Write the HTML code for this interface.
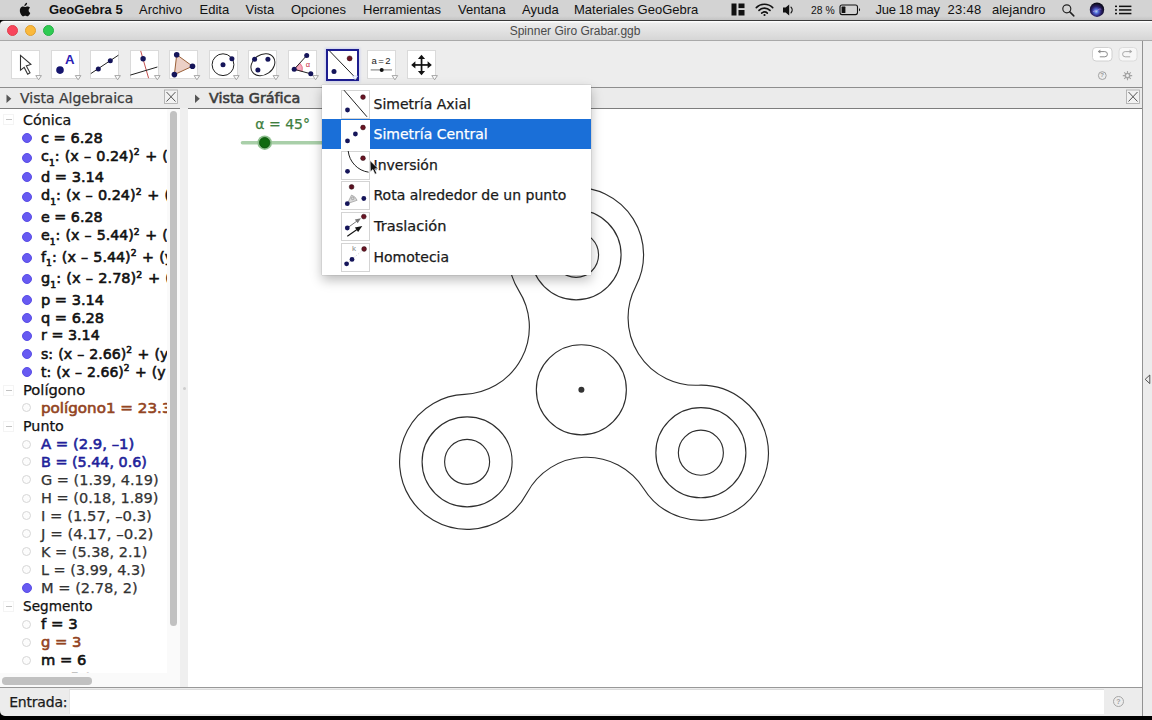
<!DOCTYPE html>
<html lang="es">
<head>
<meta charset="utf-8">
<title>Spinner Giro Grabar.ggb</title>
<style>
html,body{margin:0;padding:0;}
body{width:1152px;height:720px;overflow:hidden;position:relative;background:#000;font-family:"DejaVu Sans","Liberation Sans",sans-serif;font-size:14px;color:#1a1a1a;}
.abs{position:absolute;}
svg{position:absolute;left:0;top:0;overflow:visible;}
#menubar{left:0;top:0;width:1152px;height:20px;background:linear-gradient(#d3d3d3 0,#d3d3d3 16px,#c4c4c4 20px);font-family:"Liberation Sans",sans-serif;font-size:13px;color:#111;}
#menubar span{position:absolute;top:2px;white-space:nowrap;line-height:15px;}
#win{left:0;top:20px;width:1152px;height:696px;background:#3a3a3a;border-radius:5px 0 0 5px;}
#titlebar{border-radius:4px 0 0 0;left:0;top:21px;width:1152px;height:20px;background:linear-gradient(#fdfdfd 0,#fdfdfd 1px,#ececec 2px,#d6d6d6 19px);border-bottom:1px solid #a9a9a9;box-sizing:border-box;font-family:"Liberation Sans",sans-serif;font-size:12px;color:#4a4a4a;}
#titlebar .t{position:absolute;left:509.7px;top:3.4px;line-height:14px;white-space:nowrap;}
.tl{position:absolute;top:4.1px;width:11px;height:11px;border-radius:50%;box-sizing:border-box;}
#toolbar{left:0;top:41px;width:1152px;height:46px;background:#ededed;}
.tb{position:absolute;top:50px;width:29px;height:29px;background:#fff;border:1px solid #dadada;box-sizing:border-box;}
#hdr{left:0;top:87px;width:1143px;height:22px;background:#ebebeb;border-top:1px solid #8e8e8e;border-bottom:1px solid #7d7d7d;box-sizing:border-box;}
#alg{left:0;top:109px;width:167px;height:564px;background:#fff;overflow:hidden;}
#vsb{left:167px;top:109px;width:13px;height:578px;background:#fafafa;}
#hsb{left:0;top:673px;width:180px;height:14px;background:#fafafa;}
#split{left:180px;top:108px;width:8px;height:579px;background:#efefef;}
#gfx{left:188px;top:109px;width:954px;height:578px;background:#fff;overflow:hidden;}
#rstrip{left:1142px;top:41px;width:10px;height:675px;background:#ececec;border-left:1px solid #929292;box-sizing:border-box;}
#inputbar{left:0;top:687px;width:1142px;height:29px;background:#ececec;border-radius:0 0 0 5px;border-top:1px solid #989898;box-sizing:border-box;}
.row{position:absolute;left:0;white-space:nowrap;height:18px;line-height:18px;}
.row .tx{position:absolute;left:41px;top:0;display:inline-block;transform-origin:0 50%;}
.cat .tx{left:23.4px;}
.b .tx{font-weight:normal;-webkit-text-stroke:0.58px currentColor;transform:scaleX(1.0);}
.dot{position:absolute;left:22px;top:4px;width:10px;height:10px;border-radius:50%;box-sizing:border-box;}
.on{background:#675af2;border:1px solid #5a4ee6;}
.off{background:#fcfcfc;border:1px solid #d6d6d6;width:9px;height:9px;left:22.3px;top:4.5px;}
.exp{position:absolute;left:3px;top:4px;width:11px;height:11px;border:1px solid #f4f4f4;box-sizing:border-box;}
.exp:after{content:"";position:absolute;left:1.5px;top:4px;width:6px;height:1px;background:#c2c2c2;}
sub{font-size:9px;vertical-align:baseline;position:relative;top:4.5px;line-height:0;}
sup{font-size:9px;vertical-align:baseline;position:relative;top:-5.7px;line-height:0;letter-spacing:0.4px;}
.eq .tx{word-spacing:0.6px;}
#popup{left:322px;top:84.6px;width:269.2px;height:190.6px;background:#fff;box-shadow:0 5px 11px rgba(0,0,0,0.27),0 0 1px rgba(0,0,0,0.35);}
.mi{position:absolute;left:0;width:269.2px;height:30px;}
.mi .ic{position:absolute;left:19px;top:1px;width:29px;height:29px;background:#fff;border:1px solid #d4d4d4;box-sizing:border-box;}
.mi .lb{position:absolute;left:51.5px;top:6px;line-height:18px;white-space:nowrap;}
.mi.sel{background:#1a6fd8;color:#fff;}
.mi.sel .ic{border-color:#fff;}
.row{width:167px;color:#111;}
.g .tx,.cat .tx,.mi .lb,.rg{-webkit-text-stroke:0.25px currentColor;}
.br{color:#934422;}.bl{color:#221f9a;}.g{color:#333;}
</style>
</head>
<body>
<div id="menubar" class="abs">
<svg width="1152" height="20" viewBox="0 0 1152 20">
<!-- apple -->
<path fill="#111" transform="translate(25 9.3) scale(0.86) translate(-26.7 -10)" d="M28.3 5.1c.9-1.1.8-2.2.8-2.6-.8.05-1.75.55-2.3 1.2-.6.65-.95 1.5-.85 2.45.9.05 1.7-.4 2.35-1.05zM30.9 11.1c0-1.9 1.55-2.8 1.6-2.85-.9-1.3-2.25-1.45-2.75-1.5-1.15-.1-2.25.7-2.85.7-.6 0-1.5-.7-2.5-.65-1.25 0-2.45.75-3.1 1.9-1.3 2.3-.35 5.7.95 7.55.65.9 1.4 1.95 2.35 1.9.95-.05 1.3-.6 2.45-.6 1.15 0 1.45.6 2.45.6 1 0 1.65-.95 2.3-1.85.7-1.05 1-2.05 1-2.1-.05-.05-1.9-.75-1.9-3.1z"/>
<!-- layout icon -->
<rect x="731.5" y="3.5" width="5" height="12" fill="#111"/><rect x="738.5" y="3.5" width="6" height="4.6" fill="#111"/><rect x="738.5" y="10" width="6" height="5.5" fill="#111"/>
<!-- wifi -->
<g fill="none" stroke="#111" stroke-width="1.6" stroke-linecap="round"><path d="M756.3 7.6a11.6 11.6 0 0 1 16.4 0"/><path d="M759 10.4a7.8 7.8 0 0 1 11 0"/><path d="M761.7 13.1a3.9 3.9 0 0 1 5.6 0"/></g><circle cx="764.5" cy="15" r="1.1" fill="#111"/>
<!-- volume -->
<path fill="#111" d="M783 7.6h2.6l3.6-3v10.8l-3.6-3H783z"/><path d="M791 7.2a4 4 0 0 1 0 5.6" fill="none" stroke="#111" stroke-width="1.2" stroke-linecap="round"/>
<!-- battery -->
<rect x="840" y="5" width="17.5" height="9.6" rx="2" fill="none" stroke="#111" stroke-width="1.1"/><rect x="841.6" y="6.6" width="3.8" height="6.4" rx="0.6" fill="#111"/><path d="M859 8.3v3a1.6 1.6 0 0 0 0-3z" fill="#111"/>
<!-- search -->
<circle cx="1066.8" cy="8.8" r="4" fill="none" stroke="#222" stroke-width="1.15"/><path d="M1069.8 11.9l4 4" stroke="#222" stroke-width="1.5" stroke-linecap="round"/>
<!-- siri -->
<defs><radialGradient id="siri" cx="0.45" cy="0.62" r="0.62"><stop offset="0" stop-color="#a8dcf4"/><stop offset="0.25" stop-color="#4f66d6"/><stop offset="0.55" stop-color="#2a1f6a"/><stop offset="0.9" stop-color="#0c0b1c"/></radialGradient></defs>
<circle cx="1097" cy="9.7" r="7.2" fill="url(#siri)"/><path d="M1093 11.8c1.6-1.6 3.2-.2 4.6-1.6s2.6-1.4 3.6-.8" stroke="#c79be0" stroke-width="1" fill="none" opacity=".55"/>
<!-- list -->
<g fill="#111"><rect x="1115" y="5.6" width="2" height="1.5"/><rect x="1119" y="5.6" width="12.4" height="1.5"/><rect x="1115" y="9.2" width="2" height="1.5"/><rect x="1119" y="9.2" width="12.4" height="1.5"/><rect x="1115" y="12.8" width="2" height="1.5"/><rect x="1119" y="12.8" width="12.4" height="1.5"/></g>
</svg>
<span style="left:49px;font-weight:bold">GeoGebra 5</span>
<span style="left:139px">Archivo</span>
<span style="left:199.5px">Edita</span>
<span style="left:245.5px">Vista</span>
<span style="left:291px">Opciones</span>
<span style="left:363px">Herramientas</span>
<span style="left:458px">Ventana</span>
<span style="left:522px">Ayuda</span>
<span style="left:574px">Materiales GeoGebra</span>
<span style="left:811.3px;top:3px;font-size:11.5px;transform:scaleX(0.9);transform-origin:0 50%">28 %</span>
<span style="left:875.5px;letter-spacing:-0.3px">Jue 18 may</span>
<span style="left:947.5px;letter-spacing:0.3px">23:48</span>
<span style="left:992px">alejandro</span>
</div>
<div id="win" class="abs"></div>
<div id="titlebar" class="abs">
<div class="tl" style="left:7px;background:#f8455c;border:0.5px solid #e0404a"></div>
<div class="tl" style="left:25px;background:#fbb93c;border:0.5px solid #e0a030"></div>
<div class="tl" style="left:43.2px;background:#2fcb52;border:0.5px solid #25b045"></div>
<div class="t">Spinner Giro Grabar.ggb</div>
</div>
<div id="toolbar" class="abs"></div>
<div class="tb" style="left:11px"></div>
<div class="tb" style="left:50.5px"></div>
<div class="tb" style="left:90px"></div>
<div class="tb" style="left:129.7px"></div>
<div class="tb" style="left:169.3px"></div>
<div class="tb" style="left:208.7px"></div>
<div class="tb" style="left:248.3px"></div>
<div class="tb" style="left:288px"></div>
<div class="abs" style="left:325.5px;top:48.5px;width:33px;height:32px;background:#fff;border:2.6px solid #1d1d8f;box-sizing:border-box;box-shadow:0 0 2px 1px rgba(200,205,240,0.9)"></div>
<div class="tb" style="left:367.3px"></div>
<div class="tb" style="left:407px"></div>
<div class="abs" style="left:371.5px;top:54.5px;font:9.5px 'Liberation Sans',sans-serif;color:#222;white-space:nowrap;line-height:11px;word-spacing:-1.2px">a = 2</div>
<div class="abs" style="left:65.1px;top:52.8px;font:bold 13.2px 'Liberation Sans',sans-serif;color:#2a20b4;line-height:14px">A</div>
<div class="abs" style="left:305.8px;top:60.4px;font:7.5px 'Liberation Sans',sans-serif;color:#c8283c;line-height:10px">α</div>
<svg width="1152" height="120" viewBox="0 0 1152 120">
<!-- dropdown triangles -->
<g fill="#fff" stroke="#9c9c9c" stroke-width="0.9" stroke-linejoin="round">
<path d="M35.8 75.6h5.6l-2.8 4.2z"/><path d="M75.3 75.6h5.6l-2.8 4.2z"/><path d="M114.8 75.6h5.6l-2.8 4.2z"/><path d="M154.5 75.6h5.6l-2.8 4.2z"/><path d="M194.1 75.6h5.6l-2.8 4.2z"/><path d="M233.5 75.6h5.6l-2.8 4.2z"/><path d="M273.1 75.6h5.6l-2.8 4.2z"/><path d="M312.8 75.6h5.6l-2.8 4.2z"/><path d="M392.1 75.6h5.6l-2.8 4.2z"/><path d="M431.8 75.6h5.6l-2.8 4.2z"/>
</g>
<!-- 1 move arrow -->
<path d="M20.5 55.4l10.4 9-4.6 1.5 3.7 6.8-2.3 1.5-3.5-6.8-3.7 2.8z" fill="#fff" stroke="#333" stroke-width="1.1" stroke-linejoin="miter"/>
<!-- 2 point -->
<circle cx="60" cy="70.1" r="3.8" fill="#15156e"/>
<!-- 3 line -->
<path d="M90.8 73.6L118.4 55.2" stroke="#222" stroke-width="1"/><circle cx="98.3" cy="68.9" r="2.5" fill="#15155a"/><circle cx="110.3" cy="60.7" r="2.5" fill="#15155a"/>
<!-- 4 perpendicular -->
<path d="M140.7 50.9L148.6 78.2" stroke="#c4504e" stroke-width="1"/><path d="M130.3 75.1L157.4 67" stroke="#222" stroke-width="1"/><circle cx="143.1" cy="58.7" r="2.7" fill="#15155a"/>
<!-- 5 polygon -->
<path d="M176.7 54.7L192.5 66.2 174.4 74.6z" fill="#ecd0c6" stroke="#9a6038" stroke-width="1"/><circle cx="176.7" cy="54.7" r="2.8" fill="#15155a"/><circle cx="192.5" cy="66.2" r="2.8" fill="#15155a"/><circle cx="174.4" cy="74.6" r="2.8" fill="#15155a"/>
<!-- 6 circle -->
<circle cx="223" cy="64.7" r="10.9" fill="none" stroke="#222" stroke-width="1"/><circle cx="223" cy="64.7" r="2.5" fill="#15155a"/><circle cx="231.9" cy="58.7" r="2.5" fill="#15155a"/>
<!-- 7 ellipse -->
<ellipse cx="262.9" cy="64.7" rx="12.8" ry="10" transform="rotate(-35 262.9 64.7)" fill="none" stroke="#222" stroke-width="1"/><circle cx="254.6" cy="59.2" r="2.5" fill="#15155a"/><circle cx="267.9" cy="59.2" r="2.5" fill="#15155a"/><circle cx="257.9" cy="69.9" r="2.5" fill="#15155a"/>
<!-- 8 angle -->
<path d="M294.2 69.3l5.6-6.2a8.3 8.3 0 0 1 2.4 8.3z" fill="#f6a8bc" stroke="#d8486a" stroke-width="0.6"/><path d="M306.7 55.5L294.2 69.3 310.8 73.8" fill="none" stroke="#222" stroke-width="1"/><circle cx="306.7" cy="55.5" r="2.5" fill="#15155a"/><circle cx="294.2" cy="69.3" r="2.5" fill="#15155a"/><circle cx="310.8" cy="73.8" r="2.5" fill="#15155a"/>
<!-- 9 reflect (selected) -->
<path d="M329 50.4L357 79.4" stroke="#222" stroke-width="1"/><circle cx="349.6" cy="58.4" r="2.5" fill="#6a1424" stroke="#2a0a10" stroke-width="0.5"/><circle cx="334" cy="71.5" r="2.5" fill="#15155a"/><path d="M352.6 76h5l-2.5 3.8z" fill="#fff" stroke="#b9c4ee" stroke-width="0.7"/>
<!-- 10 slider -->
<path d="M370.7 69.9H392" stroke="#8a8a8a" stroke-width="1.2"/><circle cx="381.7" cy="69.9" r="2" fill="#111"/>
<!-- 11 move view -->
<g fill="#111"><rect x="420.7" y="57" width="1.7" height="16"/><rect x="413.5" y="64.1" width="16" height="1.7"/><path d="M421.5 54.7l3.6 4.2h-7.2z"/><path d="M421.5 75.2l3.6-4.2h-7.2z"/><path d="M411.2 64.95l4.2-3.6v7.2z"/><path d="M431.8 64.95l-4.2-3.6v7.2z"/></g>
<!-- undo/redo -->
<rect x="1092.5" y="47.5" width="19.5" height="13.5" rx="3.5" fill="#fff" stroke="#d0d0d0"/><rect x="1119" y="47.5" width="18" height="13.5" rx="3.5" fill="#f7f7f7" stroke="#dcdcdc"/>
<path d="M1098.5 51.6h6.3a2.6 2.6 0 0 1 0 5.2h-5" fill="none" stroke="#8a8a8a" stroke-width="1"/><path d="M1100.4 49.6l-2.6 2 2.6 2z" fill="#8a8a8a"/>
<path d="M1131.5 51.6h-6.3a2.6 2.6 0 0 0 0 5.2h5" fill="none" stroke="#a8a8a8" stroke-width="1"/><path d="M1129.6 49.6l2.6 2-2.6 2z" fill="#a8a8a8"/>
<!-- help + gear -->
<circle cx="1102.3" cy="75.6" r="3.9" fill="none" stroke="#9a9a9a" stroke-width="0.9"/>
<g stroke="#a4a4a4" stroke-width="1.1"><path d="M1127.5 70.9v9.4M1122.8 75.6h9.4M1124.2 72.3l6.6 6.6M1130.8 72.3l-6.6 6.6"/></g><circle cx="1127.5" cy="75.6" r="2.9" fill="#a4a4a4"/><circle cx="1127.5" cy="75.6" r="1.5" fill="#ededed"/>
</svg>
<div class="abs" style="left:1100.3px;top:72.3px;font:bold 6px 'Liberation Sans',sans-serif;color:#9a9a9a;line-height:7px">?</div>
<div id="hdr" class="abs"></div>
<div id="split" class="abs"></div>
<div class="abs rg" style="left:20px;top:88.3px;line-height:20px;color:#3c3c3c;white-space:nowrap">Vista Algebraica</div>
<div class="abs" style="left:209px;top:88.3px;line-height:20px;color:#3c3c3c;white-space:nowrap;-webkit-text-stroke:0.58px currentColor;transform:scaleX(1.022);transform-origin:0 50%">Vista Gráfica</div>
<svg width="1152" height="120" viewBox="0 0 1152 120">
<path d="M6.5 94.6l4.8 4.2-4.8 4.2z" fill="#555"/><path d="M195 94.6l4.8 4.2-4.8 4.2z" fill="#555"/>
<rect x="164.5" y="90" width="13" height="13.5" fill="#f2f2f2" stroke="#a9a9a9" stroke-width="0.8"/><path d="M166.5 92l9 9.5M175.5 92l-9 9.5" stroke="#555" stroke-width="1"/>
<rect x="1126.5" y="90" width="13" height="13.5" fill="#f2f2f2" stroke="#a9a9a9" stroke-width="0.8"/><path d="M1128.5 92l9 9.5M1137.5 92l-9 9.5" stroke="#555" stroke-width="1"/>
</svg>
<div id="alg" class="abs">
<div class="row cat" style="top:1.9px"><i class="exp" style="top:3.6px"></i><span class="tx" style="transform:scaleX(1.0177)">Cónica</span></div>
<div class="row b" style="top:19.8px"><i class="dot on" style="top:4.2px"></i><span class="tx" style="transform:scaleX(1.0377)">c = 6.28</span></div>
<div class="row b eq" style="top:38.0px"><i class="dot on" style="top:5.7px"></i><span class="tx" style="transform:scaleX(1.0226)">c<sub>1</sub>: (x – 0.24)<sup>2</sup> + (y – 0.38)<sup>2</sup> = 1</span></div>
<div class="row b" style="top:59.0px"><i class="dot on" style="top:4.2px"></i><span class="tx" style="transform:scaleX(1.0401)">d = 3.14</span></div>
<div class="row b eq" style="top:77.3px"><i class="dot on" style="top:5.3px"></i><span class="tx" style="transform:scaleX(1.0300)">d<sub>1</sub>: (x – 0.24)<sup>2</sup> + (y – 0.38)<sup>2</sup> = 0.25</span></div>
<div class="row b" style="top:98.5px"><i class="dot on" style="top:4.2px"></i><span class="tx" style="transform:scaleX(1.0203)">e = 6.28</span></div>
<div class="row b eq" style="top:117.2px"><i class="dot on" style="top:5.5px"></i><span class="tx" style="transform:scaleX(1.0130)">e<sub>1</sub>: (x – 5.44)<sup>2</sup> + (y – 0.6)<sup>2</sup> = 1</span></div>
<div class="row b eq" style="top:138.5px"><i class="dot on" style="top:5.3px"></i><span class="tx" style="transform:scaleX(1.0200)">f<sub>1</sub>: (x – 5.44)<sup>2</sup> + (y – 0.6)<sup>2</sup> = 0.25</span></div>
<div class="row b eq" style="top:160.3px"><i class="dot on" style="top:5.2px"></i><span class="tx" style="transform:scaleX(1.0370)">g<sub>1</sub>: (x – 2.78)<sup>2</sup> + (y – 2)<sup>2</sup> = 1</span></div>
<div class="row b" style="top:181.6px"><i class="dot on" style="top:4.4px"></i><span class="tx" style="transform:scaleX(1.0401)">p = 3.14</span></div>
<div class="row b" style="top:199.6px"><i class="dot on" style="top:4.4px"></i><span class="tx" style="transform:scaleX(1.0400)">q = 6.28</span></div>
<div class="row b" style="top:217.1px"><i class="dot on" style="top:4.5px"></i><span class="tx" style="transform:scaleX(1.0209)">r = 3.14</span></div>
<div class="row b eq" style="top:235.6px"><i class="dot on" style="top:4.4px"></i><span class="tx" style="transform:scaleX(1.0091)">s: (x – 2.66)<sup>2</sup> + (y – 5)<sup>2</sup> = 1</span></div>
<div class="row b eq" style="top:253.6px"><i class="dot on" style="top:4.4px"></i><span class="tx" style="transform:scaleX(1.0004)">t: (x – 2.66)<sup>2</sup> + (y – 5)<sup>2</sup> = 0.25</span></div>
<div class="row cat" style="top:271.5px"><i class="exp" style="top:4.0px"></i><span class="tx" style="transform:scaleX(1.0511)">Polígono</span></div>
<div class="row b br" style="top:289.8px"><i class="dot off" style="top:4.7px"></i><span class="tx" style="transform:scaleX(1.0802)">polígono1 = 23.38</span></div>
<div class="row cat" style="top:307.5px"><i class="exp" style="top:4.0px"></i><span class="tx" style="transform:scaleX(1.0209)">Punto</span></div>
<div class="row b bl" style="top:325.8px"><i class="dot off" style="top:4.8px"></i><span class="tx" style="transform:scaleX(1.0578)">A = (2.9, –1)</span></div>
<div class="row b bl" style="top:343.8px"><i class="dot off" style="top:4.7px"></i><span class="tx" style="transform:scaleX(1.0231)">B = (5.44, 0.6)</span></div>
<div class="row g" style="top:361.8px"><i class="dot off" style="top:4.7px"></i><span class="tx" style="transform:scaleX(1.0354)">G = (1.39, 4.19)</span></div>
<div class="row g" style="top:379.8px"><i class="dot off" style="top:4.8px"></i><span class="tx" style="transform:scaleX(1.0358)">H = (0.18, 1.89)</span></div>
<div class="row g" style="top:397.6px"><i class="dot off" style="top:4.9px"></i><span class="tx" style="transform:scaleX(1.0559)">I = (1.57, –0.3)</span></div>
<div class="row g" style="top:415.6px"><i class="dot off" style="top:4.9px"></i><span class="tx" style="transform:scaleX(1.0691)">J = (4.17, –0.2)</span></div>
<div class="row g" style="top:433.6px"><i class="dot off" style="top:4.9px"></i><span class="tx" style="transform:scaleX(1.0316)">K = (5.38, 2.1)</span></div>
<div class="row g" style="top:451.6px"><i class="dot off" style="top:4.9px"></i><span class="tx" style="transform:scaleX(1.0297)">L = (3.99, 4.3)</span></div>
<div class="row g" style="top:469.6px"><i class="dot on" style="top:4.4px"></i><span class="tx" style="transform:scaleX(1.0435)">M = (2.78, 2)</span></div>
<div class="row cat" style="top:487.5px"><i class="exp" style="top:4.0px"></i><span class="tx" style="transform:scaleX(0.9719)">Segmento</span></div>
<div class="row b" style="top:505.5px"><i class="dot off" style="top:5.0px"></i><span class="tx" style="transform:scaleX(1.0626)">f = 3</span></div>
<div class="row b br" style="top:523.8px"><i class="dot off" style="top:4.8px"></i><span class="tx" style="transform:scaleX(1.0530)">g = 3</span></div>
<div class="row b" style="top:541.5px"><i class="dot off" style="top:5.0px"></i><span class="tx" style="transform:scaleX(1.0474)">m = 6</span></div>
<div class="row b" style="top:559.5px"><i class="dot off" style="top:5.0px"></i><span class="tx">n = 5.2</span></div>
</div>
<div id="vsb" class="abs"><div class="abs" style="left:3px;top:1.5px;width:7px;height:515px;border-radius:3.5px;background:#c1c1c1"></div></div>
<div id="hsb" class="abs"><div class="abs" style="left:1.5px;top:4px;width:90px;height:7.5px;border-radius:3.75px;background:#c1c1c1"></div></div>
<div class="abs" style="left:182.5px;top:386.5px;width:3px;height:3px;border-radius:50%;background:#cdcdcd"></div>
<div id="gfx" class="abs"></div>
<svg width="1152" height="720" viewBox="0 0 1152 720">
<!-- slider -->
<path d="M242.5 142.7H330" stroke="#a9cfa9" stroke-width="3.6" stroke-linecap="round"/>
<circle cx="264.7" cy="142.7" r="7.3" fill="#8fc08f"/><circle cx="264.7" cy="142.7" r="5.2" fill="#0f6a0f" stroke="#0a520a" stroke-width="0.8"/>
<g fill="none" stroke="#2e2e2e" stroke-width="1.15"><path d="M643.75 488.73 A67.53 67.53 0 1 0 698.23 385.23 A67.53 67.53 0 0 1 635.83 286.30 A67.53 67.53 0 1 0 518.95 290.87 A67.53 67.53 0 0 1 464.47 394.37 A67.53 67.53 0 1 0 526.87 493.30 A67.53 67.53 0 0 1 643.75 488.73 Z"/><circle cx="700.87" cy="452.71" r="45.02"/><circle cx="700.87" cy="452.71" r="22.51"/><circle cx="576.07" cy="254.84" r="45.02"/><circle cx="576.07" cy="254.84" r="22.51"/><circle cx="467.11" cy="461.85" r="45.02"/><circle cx="467.11" cy="461.85" r="22.51"/><circle cx="581.35" cy="389.80" r="45.02"/></g><circle cx="581.4" cy="389.8" r="3" fill="#333"/>
</svg>
<div class="abs rg" style="left:255.3px;top:115.4px;line-height:18px;color:#3f7f3f;white-space:nowrap">α = 45°</div>
<div id="rstrip" class="abs"></div>
<svg width="1152" height="720" viewBox="0 0 1152 720"><path d="M1149.8 375v8.6l-4.6-4.3z" fill="none" stroke="#444" stroke-width="0.9" stroke-linejoin="round"/></svg>
<div id="inputbar" class="abs">
<div class="abs rg" style="left:9.2px;top:4.8px;line-height:18px;color:#1a1a1a;white-space:nowrap;letter-spacing:-0.2px">Entrada:</div>
<div class="abs" style="left:68.7px;top:1px;width:1035px;height:25.3px;background:#fff;border-top:1px solid #dcdcdc;border-left:1px solid #e4e4e4;box-sizing:border-box"></div>
<div class="abs" style="left:1113px;top:8.4px;width:11px;height:11px;border:1px solid #a6a6a6;border-radius:50%;box-sizing:border-box;font:bold 7px 'Liberation Sans',sans-serif;color:#a0a0a0;text-align:center;line-height:9px">?</div>
</div>
<div id="popup" class="abs">
<div class="mi" style="top:4px"><div class="ic"></div><div class="lb">Simetría Axial</div></div>
<div class="mi sel" style="top:34.6px"><div class="ic"></div><div class="lb">Simetría Central</div></div>
<div class="mi" style="top:65.2px"><div class="ic"></div><div class="lb">Inversión</div></div>
<div class="mi" style="top:95.8px"><div class="ic"></div><div class="lb">Rota alrededor de un punto</div></div>
<div class="mi" style="top:126.4px"><div class="ic"></div><div class="lb" style="transform:scaleX(1.04);transform-origin:0 50%">Traslación</div></div>
<div class="mi" style="top:157px"><div class="ic"></div><div class="lb">Homotecia</div></div>
</div>
<div class="abs" style="left:352px;top:243.6px;font:8px 'Liberation Sans',sans-serif;color:#8a8a8a;line-height:9px">k</div>
<svg width="1152" height="720" viewBox="0 0 1152 720">
<!-- icon1: axial -->
<path d="M344 90.2L367 116.8" stroke="#222" stroke-width="1"/><circle cx="363" cy="97.1" r="2.4" fill="#6a1424" stroke="#2a0a10" stroke-width="0.5"/><circle cx="347.5" cy="110" r="2.4" fill="#15155a"/>
<!-- icon2: central -->
<circle cx="363" cy="127.5" r="2.4" fill="#6a1424" stroke="#2a0a10" stroke-width="0.5"/><circle cx="355.4" cy="134" r="2.4" fill="#15155a"/><circle cx="347.5" cy="140.9" r="2.4" fill="#15155a"/>
<!-- icon3: inversion -->
<path d="M348.2 151a24 24 0 0 0 20.4 21.2" fill="none" stroke="#222" stroke-width="1"/><circle cx="363" cy="158.2" r="2.4" fill="#6a1424" stroke="#2a0a10" stroke-width="0.5"/><circle cx="347.5" cy="171.3" r="2.4" fill="#15155a"/>
<!-- icon4: rotate -->
<path d="M347.3 203.7l4.2-8.6a9 9 0 0 1 5.6 5.2z" fill="#d8d8d8" stroke="#999" stroke-width="0.7"/><circle cx="352.6" cy="198.4" r="1.3" fill="none" stroke="#888" stroke-width="0.6"/>
<circle cx="351.6" cy="186.9" r="2.4" fill="#5a1020" stroke="#2a0a10" stroke-width="0.5"/><circle cx="363.8" cy="198.5" r="2.4" fill="#15155a"/><circle cx="347.3" cy="203.7" r="2.4" fill="#15155a"/>
<!-- icon5: translate -->
<path d="M347.3 228L358 220.3" stroke="#777" stroke-width="1"/><path d="M361 218.2l-6.2 1.2 2.9 3.9z" fill="#777"/>
<path d="M347.3 236.3L357 229.5" stroke="#111" stroke-width="1.1"/><path d="M362.3 226l-7.4 1.6 3.2 4.4z" fill="#111"/>
<circle cx="363.8" cy="216.6" r="2.4" fill="#6a1424" stroke="#2a0a10" stroke-width="0.5"/><circle cx="347.3" cy="228" r="2.4" fill="#15155a"/>
<!-- icon6: dilate -->
<path d="M346.6 263.8L364.1 249" stroke="#c9c9c9" stroke-width="0.7" stroke-dasharray="1.5 1.5"/>
<circle cx="364.1" cy="249" r="2.4" fill="#6a1424" stroke="#2a0a10" stroke-width="0.5"/><circle cx="352" cy="259.4" r="2.4" fill="#15155a"/><circle cx="346.6" cy="263.8" r="2.4" fill="#15155a"/>
<!-- mouse cursor -->
<path d="M370 160.4l0.3 11.6 2.6-2.4 2 4.6 1.9-0.8-2-4.5 3.5-0.2z" fill="#111" stroke="#fff" stroke-width="0.7" stroke-linejoin="round"/>
</svg>
</body>
</html>
